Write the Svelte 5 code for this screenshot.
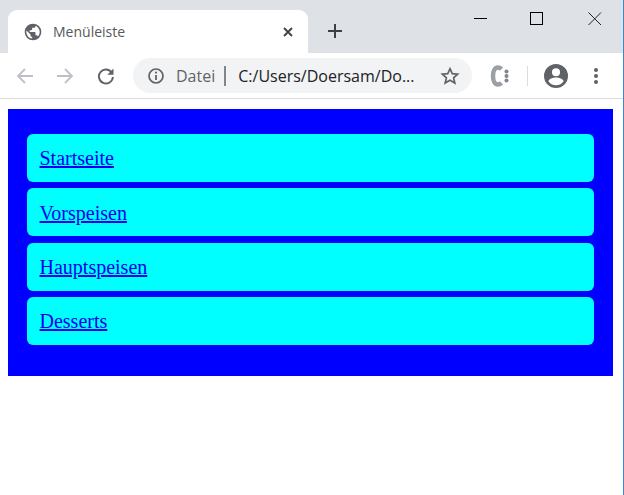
<script>
  const items = ['Startseite', 'Vorspeisen', 'Hauptspeisen', 'Desserts'];
</script>

<div class="window">
  <header class="tabstrip">
    <div class="tab">
      <svg class="globe" width="20" height="20" viewBox="0 0 24 24"><path fill="#5f6368" d="M12 2a10 10 0 1 0 0 20 10 10 0 0 0 0-20zM4 12c0-.6.07-1.2.2-1.78L9 15v1c0 1.1.9 2 2 2v1.93A8 8 0 0 1 4 12zm13.9 5.4A2 2 0 0 0 16 16h-1v-3c0-.55-.45-1-1-1H8v-2h2c.55 0 1-.45 1-1V7h2c1.1 0 2-.9 2-2v-.41a8 8 0 0 1 2.9 12.81z"/></svg>
      <span class="title">Menüleiste</span>
      <svg class="close" width="10" height="10" viewBox="0 0 10 10"><path d="M1 1l8 8M9 1l-8 8" stroke="#3c4043" stroke-width="1.8" fill="none"/></svg>
    </div>
    <svg class="plus" width="16" height="16" viewBox="0 0 16 16"><path d="M8 1v14M1 8h14" stroke="#3c4043" stroke-width="2" fill="none"/></svg>
    <div class="winctl">
      <svg width="14" height="14" viewBox="0 0 14 14"><path d="M0 6.5h13" stroke="#000" fill="none"/></svg>
      <svg class="max" width="14" height="14" viewBox="0 0 14 14"><rect x="0.5" y="0.5" width="12" height="12" stroke="#000" fill="none"/></svg>
      <svg class="shut" width="14" height="14" viewBox="0 0 14 14"><path d="M0.5 0.5l12.5 12.5M13 0.5l-12.5 12.5" stroke="#222" fill="none"/></svg>
    </div>
  </header>

  <nav class="toolbar">
    <svg class="nav first" width="18" height="18" viewBox="0 0 18 18"><path d="M17 9H2M9 2L2 9l7 7" stroke="#bdc1c6" stroke-width="1.8" fill="none"/></svg>
    <svg class="nav" width="18" height="18" viewBox="0 0 18 18"><path d="M1 9h15M9 2l7 7-7 7" stroke="#bdc1c6" stroke-width="1.8" fill="none"/></svg>
    <svg class="nav reload" width="18" height="18" viewBox="0 0 18 18"><path d="M15 6a7 7 0 1 0 .9 4" stroke="#5f6368" stroke-width="1.9" fill="none"/><path d="M16.5 1.5v6.2h-6.2z" fill="#5f6368"/></svg>
    <div class="omnibox">
      <svg width="18" height="18" viewBox="0 0 18 18"><circle cx="9" cy="9" r="7" stroke="#5f6368" stroke-width="1.7" fill="none"/><path d="M9 8v5" stroke="#5f6368" stroke-width="1.8"/><circle cx="9" cy="5.6" r="1.1" fill="#5f6368"/></svg>
      <span class="scheme">Datei</span>
      <span class="sep"></span>
      <span class="url">C:/Users/Doersam/Do...</span>
      <svg class="star" width="20" height="20" viewBox="0 0 24 24"><path d="M12 3.2l2.7 6 6.5.6-4.9 4.3 1.5 6.4L12 17.1l-5.8 3.4 1.5-6.4-4.9-4.3 6.5-.6z" stroke="#5f6368" stroke-width="2" stroke-linejoin="miter" fill="none"/></svg>
    </div>
    <svg class="ext" width="20" height="22" viewBox="0 0 20 22"><path d="M11.500 4.200C10.500 3.200 9.400 2.500 8 2.500 5.200 2.500 3 5.500 3 11s2.200 8.500 5 8.500c1.400 0 2.500-.7 3.500-1.700" stroke="#9aa0a6" stroke-width="4.500" fill="none"/><circle cx="16.500" cy="6.500" r="2" fill="#80868b"/><circle cx="16.500" cy="11" r="2" fill="#80868b"/><circle cx="16.500" cy="15.500" r="2" fill="#80868b"/></svg>
    <span class="divider"></span>
    <svg class="avatar" width="24" height="24" viewBox="0 0 24 24"><path fill="#5f6368" d="M12 0a12 12 0 1 0 0 24 12 12 0 0 0 0-24zm0 4.200a4 4 0 1 1 0 8.100 4 4 0 0 1 0-8.100zm0 17a9 9 0 0 1-7.600-4c.1-2.500 5-3.800 7.600-3.800s7.500 1.300 7.600 3.800a9 9 0 0 1-7.600 4z"/></svg>
    <svg class="more" width="4" height="16" viewBox="0 0 4 16"><circle cx="2" cy="2" r="2" fill="#5f6368"/><circle cx="2" cy="8" r="2" fill="#5f6368"/><circle cx="2" cy="14" r="2" fill="#5f6368"/></svg>
  </nav>

  <main class="viewport">
    <ul class="menu">
      {#each items as item}
        <li><a href="#top">{item}</a></li>
      {/each}
    </ul>
  </main>
</div>

<style>
  :global(body) { margin: 0; background: #fff; overflow: hidden; }
  .window {
    width: 624px; height: 495px; box-sizing: border-box; overflow: hidden;
    border-right: 1px solid #3b88c9;
    font-family: "Open Sans", "Noto Sans", sans-serif;
  }
  .tabstrip { height: 53px; background: #dee1e6; display: flex; align-items: flex-start; }
  .tab {
    margin: 10px 0 0 8px; width: 300px; height: 43px; box-sizing: border-box; background: #fff;
    border-radius: 9px 9px 0 0; display: flex; align-items: center; padding: 0 15px 0 15px;
  }
  .globe { flex: none; }
  .title { margin-left: 10px; font-size: 14px; color: #55585c; flex: 1; }
  .plus { margin: 23px 0 0 19px; flex: none; }
  .winctl { margin-left: auto; display: flex; padding: 12px 21px 0 0; }
  .max { margin-left: 42px; }
  .shut { margin-left: 44px; }
  .toolbar { height: 45px; border-bottom: 1px solid #dadce0; display: flex; align-items: center; background: #fff; }
  .nav { flex: none; margin-left: 22px; }
  .nav.first { margin-left: 16px; }
  .nav.reload { margin-left: 23px; }
  .omnibox {
    margin-left: 18px; width: 339px; height: 35px; border-radius: 18px; background: #f1f3f4;
    display: flex; align-items: center; padding-left: 14px; box-sizing: border-box; flex: none;
  }
  .scheme { margin-left: 11px; font-size: 16px; color: #5f6368; }
  .sep { width: 2px; height: 20px; background: #80868b; margin: 0 12px 0 9px; }
  .url { font-size: 16px; color: #202124; white-space: nowrap; }
  .star { margin-left: auto; margin-right: 12px; }
  .ext { margin-left: 18px; flex: none; }
  .divider { width: 1px; height: 20px; background: #dadce0; margin-left: 17px; flex: none; }
  .avatar { margin-left: 16px; flex: none; }
  .more { margin-left: 26px; flex: none; }
  .viewport { padding: 10px 0 0 8px; }
  .menu {
    list-style: none; margin: 0; width: 605px; box-sizing: border-box; background: #00f;
    padding: 25px 19px 31px; display: flex; flex-direction: column; gap: 6.330px;
  }
  .menu li {
    background: #0ff; border-radius: 6px; height: 48px; padding: 1.700px 12.500px 0; box-sizing: border-box; display: flex; align-items: center;
    font: 20px "Liberation Serif", serif;
  }
  a { color: #00e; text-decoration: underline; }
</style>
